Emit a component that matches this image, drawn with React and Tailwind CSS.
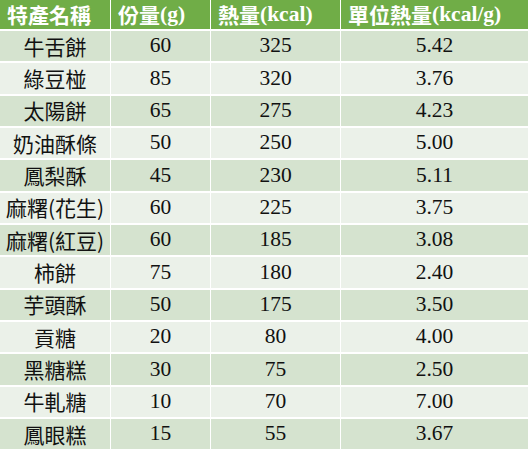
import React from 'react';

const rows = [
  ['牛舌餅', '60', '325', '5.42'],
  ['綠豆椪', '85', '320', '3.76'],
  ['太陽餅', '65', '275', '4.23'],
  ['奶油酥條', '50', '250', '5.00'],
  ['鳳梨酥', '45', '230', '5.11'],
  ['麻糬(花生)', '60', '225', '3.75'],
  ['麻糬(紅豆)', '60', '185', '3.08'],
  ['柿餅', '75', '180', '2.40'],
  ['芋頭酥', '50', '175', '3.50'],
  ['貢糖', '20', '80', '4.00'],
  ['黑糖糕', '30', '75', '2.50'],
  ['牛軋糖', '10', '70', '7.00'],
  ['鳳眼糕', '15', '55', '3.67'],
];

// header split into CJK part + latin part so each gets its own face
const headers = [
  ['特產名稱', ''],
  ['份量', '(g)'],
  ['熱量', '(kcal)'],
  ['單位熱量', '(kcal/g)'],
];
const widths = ['w-[110px]', 'w-[100px]', 'w-[130px]', 'flex-1'];

const cjk = "font-['Noto_Sans_CJK_TC',sans-serif]";
const serif = "font-['Liberation_Serif','Times_New_Roman',serif]";

export default function App() {
  return (
    <div className="w-[528px] h-[450px] overflow-hidden bg-white">
      <div className="flex h-[29px] bg-[#70ad47] text-white font-bold text-[21px] leading-none">
        {headers.map((h, i) => (
          <div
            key={i}
            className={`${widths[i]} flex items-center pl-[7px] ${i > 0 ? 'border-l border-white' : ''}`}
          >
            <span className={cjk}>{h[0]}</span>
            <span className={`${serif} text-[21.5px]`}>{h[1]}</span>
          </div>
        ))}
      </div>
      {rows.map((r, ri) => (
        <div
          key={r[0]}
          className={`flex h-[32.33px] border-t-2 border-white text-[21px] leading-none text-[#111] ${
            ri % 2 === 0 ? 'bg-[#d5e3cf]' : 'bg-[#ebf1e9]'
          }`}
        >
          {r.map((c, i) => (
            <div
              key={i}
              className={`${widths[i]} flex items-center justify-center ${i > 0 ? 'border-l border-white' : ''}`}
            >
              {i === 0 ? (
                <span className={cjk}>{c}</span>
              ) : (
                <span className={`${serif} text-[21.5px]`}>{c}</span>
              )}
            </div>
          ))}
        </div>
      ))}
    </div>
  );
}
